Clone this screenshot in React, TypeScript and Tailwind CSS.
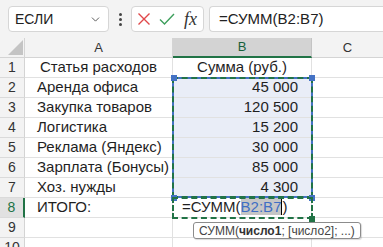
import { ChevronDown } from "lucide-react";

const rows: [string, string][] = [
  ["Статья расходов", "Сумма (руб.)"],
  ["Аренда офиса", "45 000"],
  ["Закупка товаров", "120 500"],
  ["Логистика", "15 200"],
  ["Реклама (Яндекс)", "30 000"],
  ["Зарплата (Бонусы)", "85 000"],
  ["Хоз. нужды", "4 300"],
  ["ИТОГО:", ""],
  ["", ""],
  ["", ""],
];

const Handle = ({ className }: { className: string }) => (
  <div className={`absolute w-[6px] h-[6px] ${className}`} />
);

const App = () => {
  return (
    <div
      className="w-[383px] h-[247px] overflow-hidden bg-white text-[#1f1f1f]"
      style={{ fontFamily: "'Liberation Sans', Arial, sans-serif" }}
    >
      {/* formula bar */}
      <div className="h-[38px] bg-[#f3f3f3] flex items-center pl-[8px]">
        <div className="w-[101px] h-[26px] bg-white border border-[#d6d6d6] rounded-[4px] flex items-center justify-between pl-[6px] pr-[6px]">
          <span className="text-[14px] text-[#222]">ЕСЛИ</span>
          <ChevronDown size={13} strokeWidth={1.6} className="text-[#444]" />
        </div>
        <div className="w-[22px] flex flex-col items-center gap-[2px]">
          <div className="w-[3px] h-[3px] bg-[#444] rounded-full" />
          <div className="w-[3px] h-[3px] bg-[#444] rounded-full" />
          <div className="w-[3px] h-[3px] bg-[#444] rounded-full" />
        </div>
        <div className="w-[73px] h-[26px] bg-white border border-[#d6d6d6] rounded-[4px] flex items-center pl-[5px] gap-[8px]">
          <svg width="14" height="14" viewBox="0 0 14 14">
            <path d="M1.5 1.5 L12.5 12.5 M12.5 1.5 L1.5 12.5" stroke="#e0484a" strokeWidth="1.4" fill="none" />
          </svg>
          <svg width="16" height="14" viewBox="0 0 16 14">
            <path d="M1 7.5 L5.5 12 L15 2" stroke="#3d9f5c" strokeWidth="1.4" fill="none" />
          </svg>
          <span
            className="italic text-[18px] text-[#333] leading-none ml-[1px]"
            style={{ fontFamily: "'Liberation Serif', 'Times New Roman', serif" }}
          >
            fx
          </span>
        </div>
        <div className="ml-[5px] flex-1 h-[26px] bg-white border border-[#d6d6d6] rounded-l-[4px] border-r-0 flex items-center pl-[9px]">
          <span className="text-[15px] text-[#222]">=СУММ(B2:B7)</span>
        </div>
      </div>

      {/* sheet */}
      <div className="relative">
        <div className="grid grid-cols-[25px_148px_139px_1fr] text-[15px]">
          {/* header row */}
          <div className="h-[20px] bg-[#f3f3f3] border-r border-b border-[#d4d4d4] flex items-end justify-end pr-[1px] pb-[2px]">
            <svg width="15" height="15" viewBox="0 0 15 15">
              <path d="M15 0 L15 15 L0 15 Z" fill="#c4c4c4" />
            </svg>
          </div>
          <div className="h-[20px] bg-[#f3f3f3] border-r border-b border-[#d4d4d4] flex items-center justify-center text-[13px] text-[#333]">
            A
          </div>
          <div className="h-[20px] bg-[#d3d3d3] border-r border-[#c4c4c4] border-b-2 border-b-[#217346] flex items-center justify-center text-[13px] text-[#17603a]">
            B
          </div>
          <div className="h-[20px] bg-[#f3f3f3] border-b border-[#d4d4d4] flex items-center justify-center text-[13px] text-[#333]">
            C
          </div>

          {rows.map(([a, b], i) => {
            const n = i + 1;
            const inRange = n >= 2 && n <= 7;
            const active = n === 8;
            return [
              <div
                key={`h${n}`}
                className={`h-[20px] border-b border-[#dadada] flex items-center justify-center text-[14px] ${
                  active
                    ? "bg-[#e1e1e1] text-[#217346] border-r-2 border-r-[#217346]"
                    : "bg-[#f3f3f3] text-[#333] border-r border-r-[#d4d4d4]"
                }`}
              >
                {n}
              </div>,
              <div
                key={`a${n}`}
                className={`h-[20px] border-r border-b border-[#e1e1e1] flex items-center whitespace-nowrap ${
                  n === 1 ? "justify-center" : "pl-[12px]"
                }`}
              >
                {a}
              </div>,
              <div
                key={`b${n}`}
                className={`h-[20px] border-r border-b border-[#e1e1e1] flex items-center whitespace-nowrap ${
                  n === 1 ? "justify-center" : "justify-end pr-[13px]"
                } ${inRange ? "bg-[#e9edf7]" : ""}`}
              >
                {active ? (
                  <span className="self-center mr-auto pl-[9px]">
                    =СУММ(
                    <span className="bg-[#c6c6c6] text-[#3f6fc4]">B2:B7</span>
                    <span className="border-l border-black">)</span>
                  </span>
                ) : (
                  b
                )}
              </div>,
              <div key={`c${n}`} className="h-[20px] border-b border-[#e1e1e1]" />,
            ];
          })}
        </div>

        {/* referenced range B2:B7 */}
        <div className="absolute left-[172px] top-[39px] w-[141px] h-[121px] border-2 border-[#4472c4]" />
        <div className="absolute left-[172px] top-[39px] w-[141px] h-[121px] border-2 border-dashed border-[#217346]" />
        <Handle className="left-[171px] top-[37px] bg-[#4472c4]" />
        <Handle className="left-[309px] top-[37px] bg-[#4472c4]" />
        <Handle className="left-[171px] top-[157px] bg-[#4472c4]" />
        <Handle className="left-[309px] top-[157px] bg-[#4472c4]" />

        {/* active cell B8 */}
        <div className="absolute left-[172px] top-[159px] w-[141px] h-[22px] border-2 border-dashed border-[#217346]" />
        <Handle className="left-[309px] top-[178px] bg-[#217346]" />

        {/* tooltip */}
        <div className="absolute left-[193px] top-[184px] h-[17px] px-[5px] bg-white border border-[#8c8c8c] rounded-[3px] flex items-center text-[12px] text-[#444] whitespace-nowrap shadow-[1px_1px_1px_rgba(0,0,0,0.15)]">
          СУММ(<b className="text-[#333]">число1</b>; [число2]; ...)
        </div>
      </div>
    </div>
  );
};

export default App;
